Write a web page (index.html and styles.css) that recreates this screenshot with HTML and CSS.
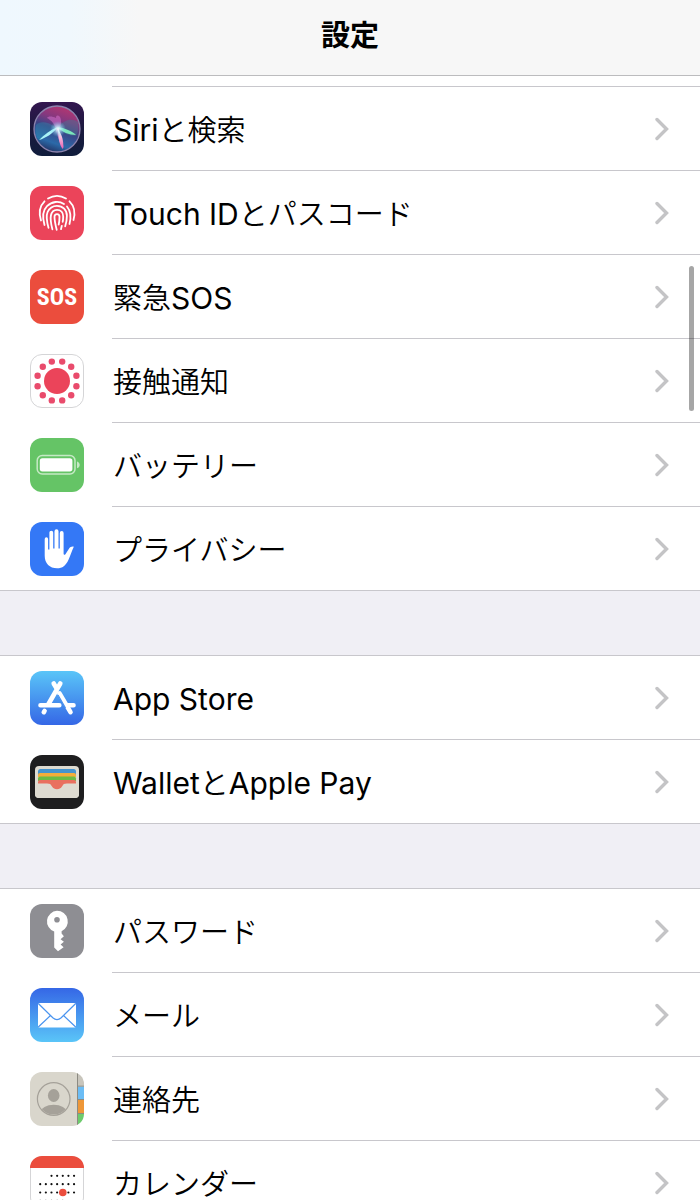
FILE: index.html
```html
<!DOCTYPE html>
<html lang="ja">
<head>
<meta charset="utf-8">
<meta name="viewport" content="width=device-width, initial-scale=1">
<title>設定</title>
<link rel="stylesheet" href="styles.css">
</head>
<body>
<svg width="0" height="0" class="defs" aria-hidden="true">
  <symbol id="chevron" viewBox="0 0 14 24"><path d="M2 2.5 11.5 12 2 21.5" fill="none" stroke="#c4c4c6" stroke-width="3.4" stroke-linecap="round" stroke-linejoin="miter"/></symbol>
</svg>
<header class="navbar"><h1 class="title">設定</h1></header>
<main class="content">
  <div class="row-end"></div>
  <nav class="group group-continued">
    <a class="row" href="#siri">
      <svg class="icon" viewBox="0 0 54 54" aria-hidden="true">
        <defs>
          <linearGradient id="siriBg" x1="0" y1="0" x2="0" y2="1"><stop offset="0" stop-color="#33164f"/><stop offset=".5" stop-color="#1b1a3e"/><stop offset="1" stop-color="#101d3c"/></linearGradient>
          <linearGradient id="siriOrb" x1=".7" y1="0" x2=".35" y2="1"><stop offset="0" stop-color="#b8366f"/><stop offset=".3" stop-color="#85387f"/><stop offset=".52" stop-color="#3b4486"/><stop offset=".8" stop-color="#2b69a8"/><stop offset="1" stop-color="#223263"/></linearGradient>
          <radialGradient id="siriGlow"><stop offset="0" stop-color="#fff"/><stop offset=".35" stop-color="#c4f4ff" stop-opacity=".7"/><stop offset="1" stop-color="#6cc8f0" stop-opacity="0"/></radialGradient>
          <linearGradient id="siriPink" x1="0" y1="0" x2="0" y2="1"><stop offset="0" stop-color="#fff"/><stop offset="1" stop-color="#e65cae"/></linearGradient>
        </defs>
        <rect width="54" height="54" rx="12" fill="url(#siriBg)"/>
        <circle cx="27" cy="27" r="23" fill="url(#siriOrb)" stroke="#8c83ad" stroke-width="1.300"/>
        <path d="M27 26C17 19 10 19 6 23c-1 7 0 12 3 15 8-3 13-7 18-12z" fill="#27a3bd" opacity=".3"/>
        <path d="M27 26c8-9 15-10 21-6 1 6 0 10-2 14-7 0-14-3-19-8z" fill="#3d7f96" opacity=".4"/>
        <path d="M26 28c-1-6-5-10-9-12 1-2 5-2 9 0 0-3 2-3 4-1 2 4 1 9-1 13 1 7 4 12 5 18-3-2-6-9-8-18z" fill="#cf6bc4" opacity=".6"/>
        <path d="M28 27c4 6 6 12 5 20-3-2-5-11-5-20z" fill="url(#siriPink)"/>
        <path d="M28 25C22 32 16 36 9 38c5-5 11-10 19-13z" fill="#a9f3f6"/>
        <path d="M27 25c8 1 15 4 19 8-7 0-14-3-19-8z" fill="#7ae6bb"/>
        <circle cx="28" cy="27" r="8" fill="url(#siriGlow)"/>
      </svg>
      <span class="label"><span class="latin">Siri</span>と検索</span>
      <svg class="chevron" aria-hidden="true"><use href="#chevron"/></svg>
    </a>
    <a class="row" href="#touchid">
      <svg class="icon" viewBox="0 0 54 54" aria-hidden="true">
        <rect width="54" height="54" rx="12" fill="#eb445a"/>
        <g fill="none" stroke="#fff" stroke-width="1.800" stroke-linecap="round">
          <path d="M18 12.500c5.600-3.300 12.400-3.300 18 0"/>
          <path d="M11 34.500C8.500 26.500 9.700 20 14.500 15.300"/>
          <path d="M39.500 15.300c4.800 4.700 6 11.200 4 18.700"/>
          <path d="M14.500 39c-2.300-8-1.800-14.500 2.500-18.800 5-5 12-5.500 17-2.200"/>
          <path d="M37 20.500c3.700 4.500 4.300 10.500 2.500 17.500"/>
          <path d="M18.500 41.800c-2-7.200-2.600-11.800-.9-15.800 1.700-3.800 5.200-6.200 9.400-6.200 5.800 0 9.900 4.200 9.900 10 0 4-.5 7-1.700 10.500"/>
          <path d="M22.400 43.300c-1.700-6.500-2.200-10.300-1.500-13.800.7-3.300 3-5.700 6.100-5.700 3.700 0 6.200 2.800 6.200 6.600 0 2-.1 3.600-.5 5.400M31.800 39.800l-.8 3.400"/>
          <path d="M26.700 43.800c-1.700-6.500-2.200-9.800-2.200-13 0-3.600 5-3.600 5 0 0 3.200-.2 5.200-.8 7.700"/>
        </g>
      </svg>
      <span class="label"><span class="latin">Touch ID</span>とパスコード</span>
      <svg class="chevron" aria-hidden="true"><use href="#chevron"/></svg>
    </a>
    <a class="row" href="#sos">
      <span class="icon sos" aria-hidden="true">SOS</span>
      <span class="label">緊急<span class="latin">SOS</span></span>
      <svg class="chevron" aria-hidden="true"><use href="#chevron"/></svg>
    </a>
    <a class="row" href="#exposure">
      <svg class="icon" viewBox="0 0 54 54" aria-hidden="true">
        <rect x=".5" y=".5" width="53" height="53" rx="11.500" fill="#fff" stroke="#d5d5d7"/>
        <circle cx="27" cy="27" r="13" fill="#eb445a"/>
        <g fill="#e94b6c">
          <circle cx="21.800" cy="7.600" r="3.200"/><circle cx="32.200" cy="7.600" r="3.200"/>
          <circle cx="41.200" cy="12.800" r="3.200"/><circle cx="46.400" cy="21.800" r="3.200"/>
          <circle cx="46.400" cy="32.200" r="3.200"/><circle cx="41.200" cy="41.200" r="3.200"/>
          <circle cx="32.200" cy="46.400" r="3.200"/><circle cx="21.800" cy="46.400" r="3.200"/>
          <circle cx="12.800" cy="41.200" r="3.200"/><circle cx="7.600" cy="32.200" r="3.200"/>
          <circle cx="7.600" cy="21.800" r="3.200"/><circle cx="12.800" cy="12.800" r="3.200"/>
        </g>
      </svg>
      <span class="label">接触通知</span>
      <svg class="chevron" aria-hidden="true"><use href="#chevron"/></svg>
    </a>
    <a class="row" href="#battery">
      <svg class="icon" viewBox="0 0 54 54" aria-hidden="true">
        <rect width="54" height="54" rx="12" fill="#65c466"/>
        <rect x="7.200" y="17.500" width="37.800" height="18.500" rx="5" fill="none" stroke="#c5e9c5" stroke-width="1.500"/>
        <rect x="9.800" y="20.200" width="32.600" height="13.200" rx="2.600" fill="#fff"/>
        <path d="M47 23.500c3.600 1.200 3.600 5.600 0 6.800z" fill="#c5e9c5"/>
      </svg>
      <span class="label">バッテリー</span>
      <svg class="chevron" aria-hidden="true"><use href="#chevron"/></svg>
    </a>
    <a class="row" href="#privacy">
      <svg class="icon" viewBox="0 0 54 54" aria-hidden="true">
        <rect width="54" height="54" rx="12" fill="#3478f6"/>
        <path d="M14.700 17a1.700 1.700 0 0 1 3.400 0v10.500h1.300V10.600a1.900 1.900 0 0 1 3.800 0v15.900h1.300V9.300a2 2 0 0 1 4 0v17.200h1.300V10.900a1.900 1.900 0 0 1 3.800 0v20.800c0 1.300 1.200 1.400 2 .2l3.200-5c1.300-1.900 3-2.600 5-2.200-1.800 3.600-3.300 9-5.400 13.200-2.600 5.400-5.900 8.400-11.300 8.400-7.500 0-12.400-4.800-12.400-12.500z" fill="#fff"/>
      </svg>
      <span class="label">プライバシー</span>
      <svg class="chevron" aria-hidden="true"><use href="#chevron"/></svg>
    </a>
  </nav>
  <nav class="group">
    <a class="row" href="#appstore">
      <svg class="icon" viewBox="0 0 54 54" aria-hidden="true">
        <defs><linearGradient id="storeBg" x1="0" y1="0" x2="0" y2="1"><stop offset="0" stop-color="#5ac5f8"/><stop offset="1" stop-color="#3567e6"/></linearGradient></defs>
        <rect width="54" height="54" rx="12" fill="url(#storeBg)"/>
        <g stroke="#fff" stroke-width="4.600" stroke-linecap="round" fill="none">
          <path d="M30.300 12.500 18.500 33M13.800 41.200l.8-1.300M23.700 12.500l3.300 5.600M29.500 22.500 40.500 41.200"/>
          <path d="M10.500 34.300h18.800M37.500 34.300h6"/>
        </g>
        <path d="m28 24 7.500 13" stroke="#478fee" stroke-width="1.200"/>
      </svg>
      <span class="label"><span class="latin">App Store</span></span>
      <svg class="chevron" aria-hidden="true"><use href="#chevron"/></svg>
    </a>
    <a class="row" href="#wallet">
      <svg class="icon" viewBox="0 0 54 54" aria-hidden="true">
        <rect width="54" height="54" rx="12" fill="#1e1e1f"/>
        <rect x="5" y="11" width="44" height="32" rx="4" fill="#dedbd1"/>
        <path d="M8 20v-3.500A2.500 2.500 0 0 1 10.500 14h33a2.500 2.500 0 0 1 2.500 2.500V20z" fill="#4594cf"/>
        <path d="M8 22v-2a2 2 0 0 1 2-2h34a2 2 0 0 1 2 2v2z" fill="#f4ad3b"/>
        <path d="M8 26v-2.500a2 2 0 0 1 2-2h34a2 2 0 0 1 2 2V26z" fill="#6dbb45"/>
        <path d="M8 29.500V27a2 2 0 0 1 2-2h34a2 2 0 0 1 2 2v2.500z" fill="#e9705f"/>
        <path d="M5 28.500h44V39a4 4 0 0 1-4 4H9a4 4 0 0 1-4-4z" fill="#dedbd1"/>
        <path d="M17 28h20c-3 .3-3.800 1.500-5 3.500-1.200 1.800-2.800 2.800-5 2.800s-3.800-1-5-2.800c-1.200-2-2-3.200-5-3.500z" fill="#e9705f"/>
      </svg>
      <span class="label"><span class="latin">Wallet</span>と<span class="latin">Apple Pay</span></span>
      <svg class="chevron" aria-hidden="true"><use href="#chevron"/></svg>
    </a>
  </nav>
  <nav class="group">
    <a class="row" href="#passwords">
      <svg class="icon" viewBox="0 0 54 54" aria-hidden="true">
        <rect width="54" height="54" rx="12" fill="#8e8e93"/>
        <path fill-rule="evenodd" d="M27 6.800a10.700 10.700 0 0 1 4.600 20.400v2.300l2.300 2.700-3.300 3 3.300 2.600-3.300 2.800 3 2.700-5.600 4-3.800-3.800V27.600A10.700 10.700 0 0 1 27 6.800zm0 6.200a2.800 2.800 0 1 0 0 5.600 2.800 2.800 0 0 0 0-5.600z" fill="#fff"/>
      </svg>
      <span class="label">パスワード</span>
      <svg class="chevron" aria-hidden="true"><use href="#chevron"/></svg>
    </a>
    <a class="row" href="#mail">
      <svg class="icon" viewBox="0 0 54 54" aria-hidden="true">
        <defs><linearGradient id="mailBg" x1="0" y1="0" x2="0" y2="1"><stop offset="0" stop-color="#3567e6"/><stop offset="1" stop-color="#5ac5f8"/></linearGradient></defs>
        <rect width="54" height="54" rx="12" fill="url(#mailBg)"/>
        <rect x="8" y="15" width="38" height="24.500" rx="1.500" fill="#fff"/>
        <path d="m8.300 15.500 14.500 14.300c2.600 2.400 5.800 2.400 8.400 0L45.700 15.500M8.300 39l12.200-11.500M45.700 39 33.500 27.500" fill="none" stroke="#4a94ef" stroke-width="1.200"/>
      </svg>
      <span class="label">メール</span>
      <svg class="chevron" aria-hidden="true"><use href="#chevron"/></svg>
    </a>
    <a class="row" href="#contacts">
      <svg class="icon" viewBox="0 0 54 54" aria-hidden="true">
        <defs>
          <clipPath id="tile"><rect width="54" height="54" rx="12"/></clipPath>
          <clipPath id="avatar"><circle cx="23.700" cy="27" r="15.600"/></clipPath>
        </defs>
        <g clip-path="url(#tile)">
          <path d="M0 0h48v54H0z" fill="#d9d6cc"/>
          <path d="M48 0h6v14h-6z" fill="#c8c5bc"/>
          <path d="M48 14.500h6V27h-6z" fill="#6cbdf5"/>
          <path d="M48 28h6v13h-6z" fill="#ee9738"/>
          <path d="M48 42h6v12h-6z" fill="#6dcb6c"/>
          <path d="M47.500 0v54M48 14.200h6M48 27.500h6M48 41.500h6" stroke="#8c8a82" stroke-width="1"/>
        </g>
        <g clip-path="url(#avatar)" fill="#a5a199"><ellipse cx="23.700" cy="23.500" rx="5.800" ry="6.500"/><ellipse cx="23.700" cy="40.500" rx="13" ry="7.800"/></g>
        <circle cx="23.700" cy="27" r="16.300" fill="none" stroke="#a5a199" stroke-width="1.200"/>
      </svg>
      <span class="label">連絡先</span>
      <svg class="chevron" aria-hidden="true"><use href="#chevron"/></svg>
    </a>
    <a class="row" href="#calendar">
      <svg class="icon" viewBox="0 0 54 54" aria-hidden="true">
        <rect x=".5" y=".5" width="53" height="53" rx="11.500" fill="#fff" stroke="#d5d5d7"/>
        <path d="M0 12A12 12 0 0 1 12 0h30a12 12 0 0 1 12 12z" fill="#eb4d3d"/>
        <g stroke="#111" stroke-width="2.200" stroke-linecap="round" stroke-dasharray="0 5.640">
          <path d="M21.500 19.800H45"/><path d="M10.200 28.200H45"/><path d="M10.200 36.500H45"/><path d="M10.200 44.900H34"/>
        </g>
        <circle cx="32.800" cy="36.500" r="3.800" fill="#eb4d3d"/>
      </svg>
      <span class="label">カレンダー</span>
      <svg class="chevron" aria-hidden="true"><use href="#chevron"/></svg>
    </a>
  </nav>
</main>
<div class="scroll-thumb"></div>
</body>
</html>
```
FILE: styles.css
```css
* { box-sizing: border-box; }

body {
  margin: 0;
  height: 100vh;
  display: flex;
  flex-direction: column;
  position: relative;
  overflow: hidden;
  background: #f0eff5;
  color: #000;
  font-family: Inter, "Noto Sans CJK JP", sans-serif;
}

.defs { position: absolute; }

.navbar {
  flex: none;
  height: 76px;
  display: flex;
  align-items: center;
  justify-content: center;
  padding-bottom: 4px;
  border-bottom: 1px solid #bcbcbe;
  background: linear-gradient(90deg, #eff8fe 0, #f0f8fd 10%, #f7f7f7 20%);
}

.title {
  margin: 0;
  font-size: 29px;
  line-height: 40px;
  font-weight: 700;
}

.content {
  flex: 1;
  min-height: 0;
  overflow-y: auto;
  scrollbar-width: none;
}

.row-end {
  height: 10px;
  background: #fff;
}

.group {
  margin-bottom: 64px;
  background: #fff;
  border-bottom: 1px solid #c8c7cc;
}

.row {
  position: relative;
  display: flex;
  align-items: center;
  height: 84px;
  padding: 1px 31px 0 30px;
  color: inherit;
  text-decoration: none;
}

.row::before {
  content: "";
  position: absolute;
  top: 0;
  left: 112px;
  right: 0;
  height: 1px;
  background: #c8c7cc;
}

.group:not(.group-continued) .row:first-child::before { left: 0; }

.icon {
  flex: none;
  width: 54px;
  height: 54px;
  margin-right: 29px;
}

.sos {
  display: flex;
  align-items: center;
  justify-content: center;
  border-radius: 12px;
  background: #eb4d3d;
  color: #fff;
  font-family: "Liberation Sans Narrow", "Roboto Condensed", Roboto, sans-serif;
  font-size: 24px;
  font-weight: 700;
}

.label {
  flex: 1;
  padding-top: 4px;
  font-size: 29px;
  line-height: 40px;
  font-weight: 350;
  white-space: nowrap;
}

.latin {
  font-size: 30px;
  font-weight: 400;
}

.chevron {
  flex: none;
  width: 14px;
  height: 24px;
}

.scroll-thumb {
  position: absolute;
  top: 266px;
  right: 6px;
  width: 5px;
  height: 145px;
  border-radius: 3px;
  background: rgba(0, 0, 0, .35);
}
```
